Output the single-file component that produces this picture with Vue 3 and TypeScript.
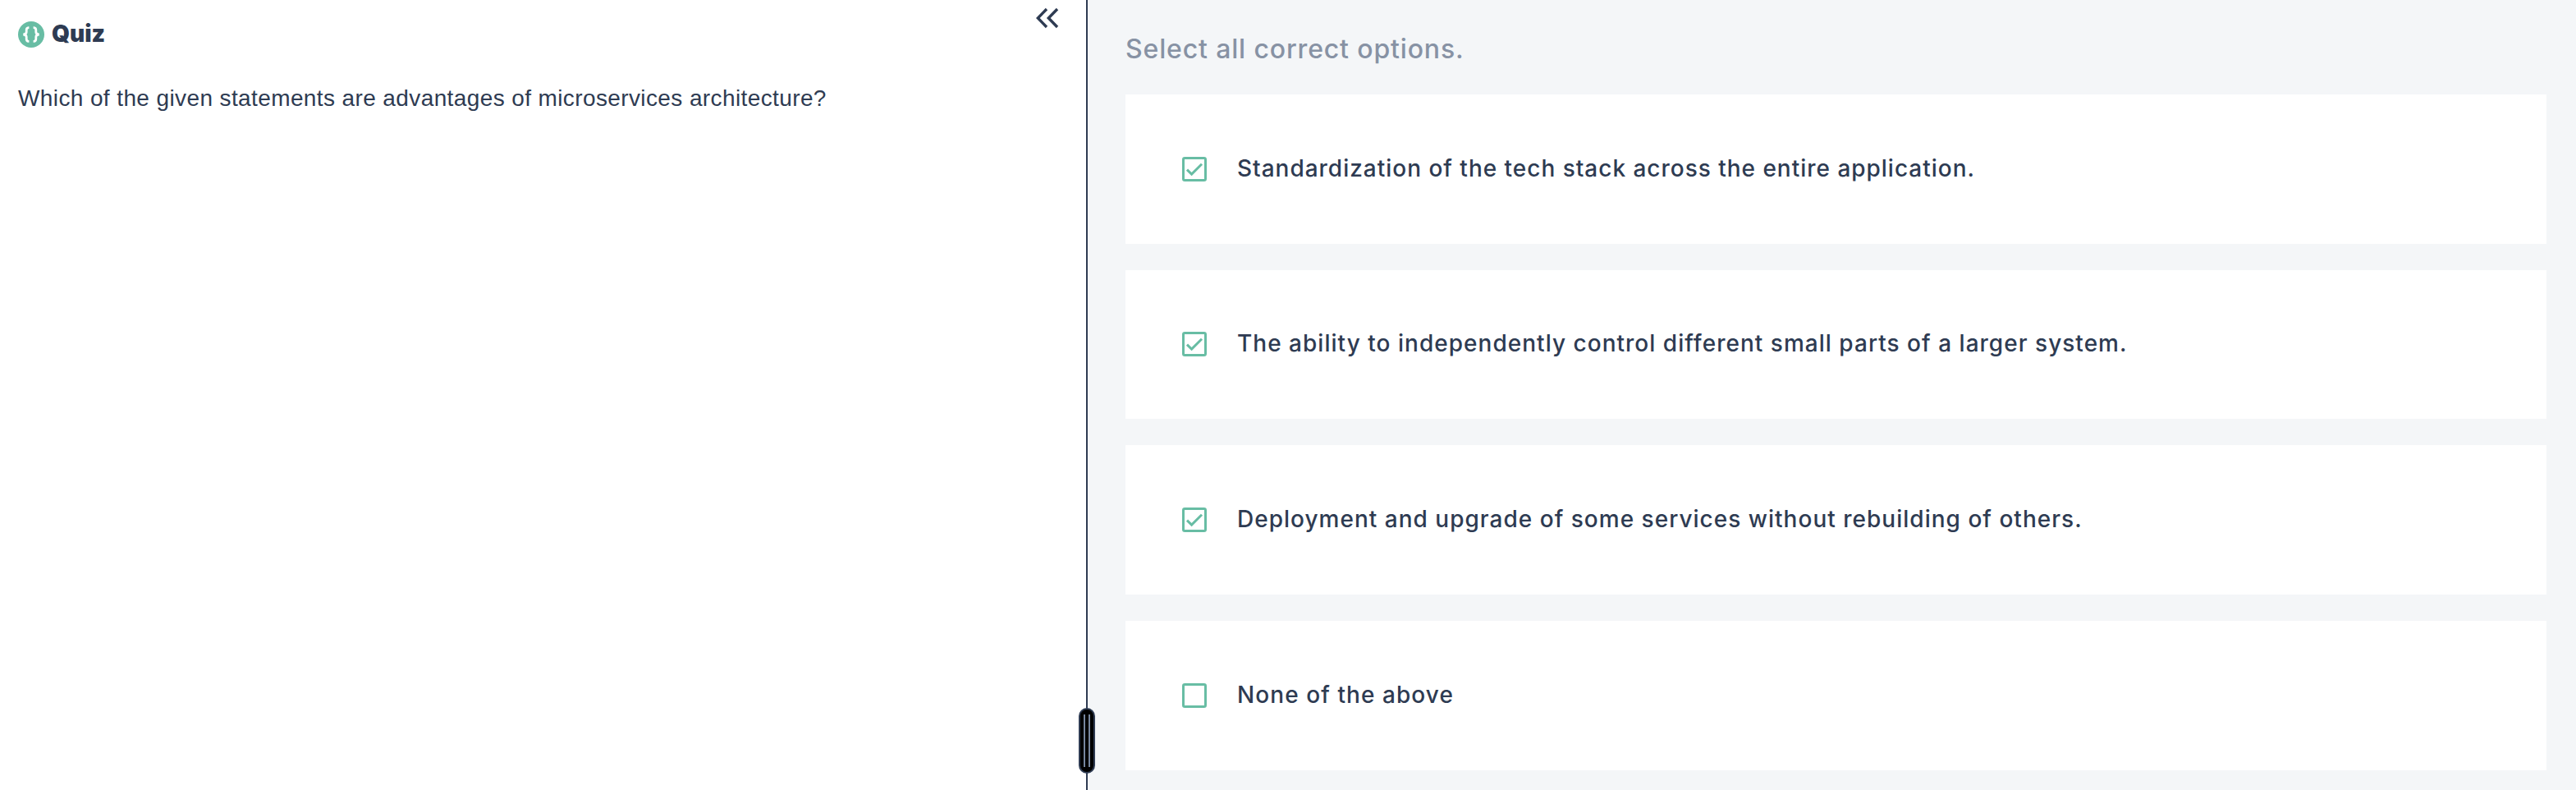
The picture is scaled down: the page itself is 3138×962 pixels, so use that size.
<script setup lang="ts">
import { ref } from 'vue'

interface Option {
  label: string
  checked: boolean
  tracking: number
}

const options = ref<Option[]>([
  { label: 'Standardization of the tech stack across the entire application.', checked: true, tracking: 0.98 },
  { label: 'The ability to independently control different small parts of a larger system.', checked: true, tracking: 1.02 },
  { label: 'Deployment and upgrade of some services without rebuilding of others.', checked: true, tracking: 1.01 },
  { label: 'None of the above', checked: false, tracking: 1.07 },
])
</script>

<template>
  <div class="quiz">
    <section class="question-pane">
      <header class="pane-header">
        <div class="title">
          <svg class="logo" width="32" height="32" viewBox="0 0 32 32">
            <circle cx="16" cy="16" r="16" fill="#68bda4" />
            <path
              d="M13.4 7.6 H12.8 Q10.2 7.8 10.2 10.5 V13 Q10.2 15.6 6.4 16 Q10.2 16.4 10.2 19 V21.5 Q10.2 24.2 12.8 24.4 H13.4"
              fill="none" stroke="#fff" stroke-width="2.8"
            />
            <path
              d="M18.6 7.6 H19.2 Q21.8 7.8 21.8 10.5 V13 Q21.8 15.6 25.6 16 Q21.8 16.4 21.8 19 V21.5 Q21.8 24.2 19.2 24.4 H18.6"
              fill="none" stroke="#fff" stroke-width="2.8"
            />
          </svg>
          <h1>Quiz</h1>
        </div>
        <button class="collapse" type="button" aria-label="Collapse">
          <svg width="28" height="26" viewBox="0 0 28 26">
            <path
              d="M13 2 L2.3 13 L13 24 M26 2 L15.3 13 L26 24"
              fill="none" stroke="#2e3b52" stroke-width="3.4"
            />
          </svg>
        </button>
      </header>
      <p class="question">Which of the given statements are advantages of microservices architecture?</p>
    </section>

    <div class="divider">
      <div class="handle"><i></i><i></i></div>
    </div>

    <section class="answer-pane">
      <h2>Select all correct options.</h2>
      <ul class="options">
        <li v-for="o in options" :key="o.label" class="option" @click="o.checked = !o.checked">
          <svg class="box" width="30" height="30" viewBox="0 0 30 30">
            <rect x="1.5" y="1.5" width="27" height="27" rx="1.8" fill="none" stroke="#68bda4" stroke-width="3" />
            <path v-if="o.checked" d="M6 15.6 L11.6 21.1 L24 8.8" fill="none" stroke="#68bda4" stroke-width="3" />
          </svg>
          <span class="label" :style="{ letterSpacing: o.tracking + 'px' }">{{ o.label }}</span>
        </li>
      </ul>
    </section>
  </div>
</template>

<style>
body {
  margin: 0;
  overflow: hidden;
}
</style>

<style scoped>
.quiz {
  display: flex;
  width: 3138px;
  height: 962px;
  background: #fff;
  color: #2e3b52;
  font-family: Inter, "Liberation Sans", sans-serif;
}
.question-pane {
  width: 1323px;
  flex: none;
}
.pane-header {
  display: flex;
  justify-content: space-between;
  align-items: flex-start;
  height: 100px;
  padding: 0 33px 0 22px;
  box-sizing: border-box;
}
.title {
  display: flex;
  align-items: center;
  gap: 9px;
  padding-top: 26px;
}
.logo {
  display: block;
}
h1 {
  margin: 0;
  padding-bottom: 2px;
  font-size: 28px;
  font-weight: 900;
  line-height: 30px;
}
.collapse {
  margin: 9px 0 0;
  padding: 0;
  border: 0;
  background: none;
}
.collapse svg {
  display: block;
}
.question {
  margin: 0;
  padding-left: 22px;
  font-family: "Liberation Sans", Arial, sans-serif;
  font-size: 28px;
  line-height: 40px;
  letter-spacing: 0.39px;
  white-space: nowrap;
}
.divider {
  position: relative;
  width: 2px;
  flex: none;
  background: #2e3b52;
}
.handle {
  position: absolute;
  left: -9px;
  bottom: 20px;
  display: flex;
  justify-content: center;
  gap: 4px;
  width: 20px;
  height: 80px;
  padding-top: 6px;
  box-sizing: border-box;
  border: 2px solid #2e3b52;
  border-radius: 10px;
  background: #000;
}
.handle i {
  width: 2px;
  height: 64px;
  background: #76869f;
}
.answer-pane {
  flex: 1;
  padding: 0 36px 0 46px;
  background: #f4f6f8;
}
h2 {
  height: 75px;
  margin: 0;
  padding-top: 40px;
  color: #8792a4;
  font-size: 32px;
  font-weight: 500;
  line-height: 40px;
  letter-spacing: 0.85px;
}
.options {
  display: flex;
  flex-direction: column;
  gap: 32px;
  margin: 0;
  padding: 0;
  list-style: none;
}
.option {
  display: flex;
  align-items: center;
  gap: 37px;
  height: 181.67px;
  padding-left: 69px;
  background: #fff;
}
.box {
  flex: none;
}
.label {
  padding-bottom: 2px;
  font-size: 28px;
  font-weight: 500;
  line-height: 40px;
  white-space: nowrap;
}
</style>
